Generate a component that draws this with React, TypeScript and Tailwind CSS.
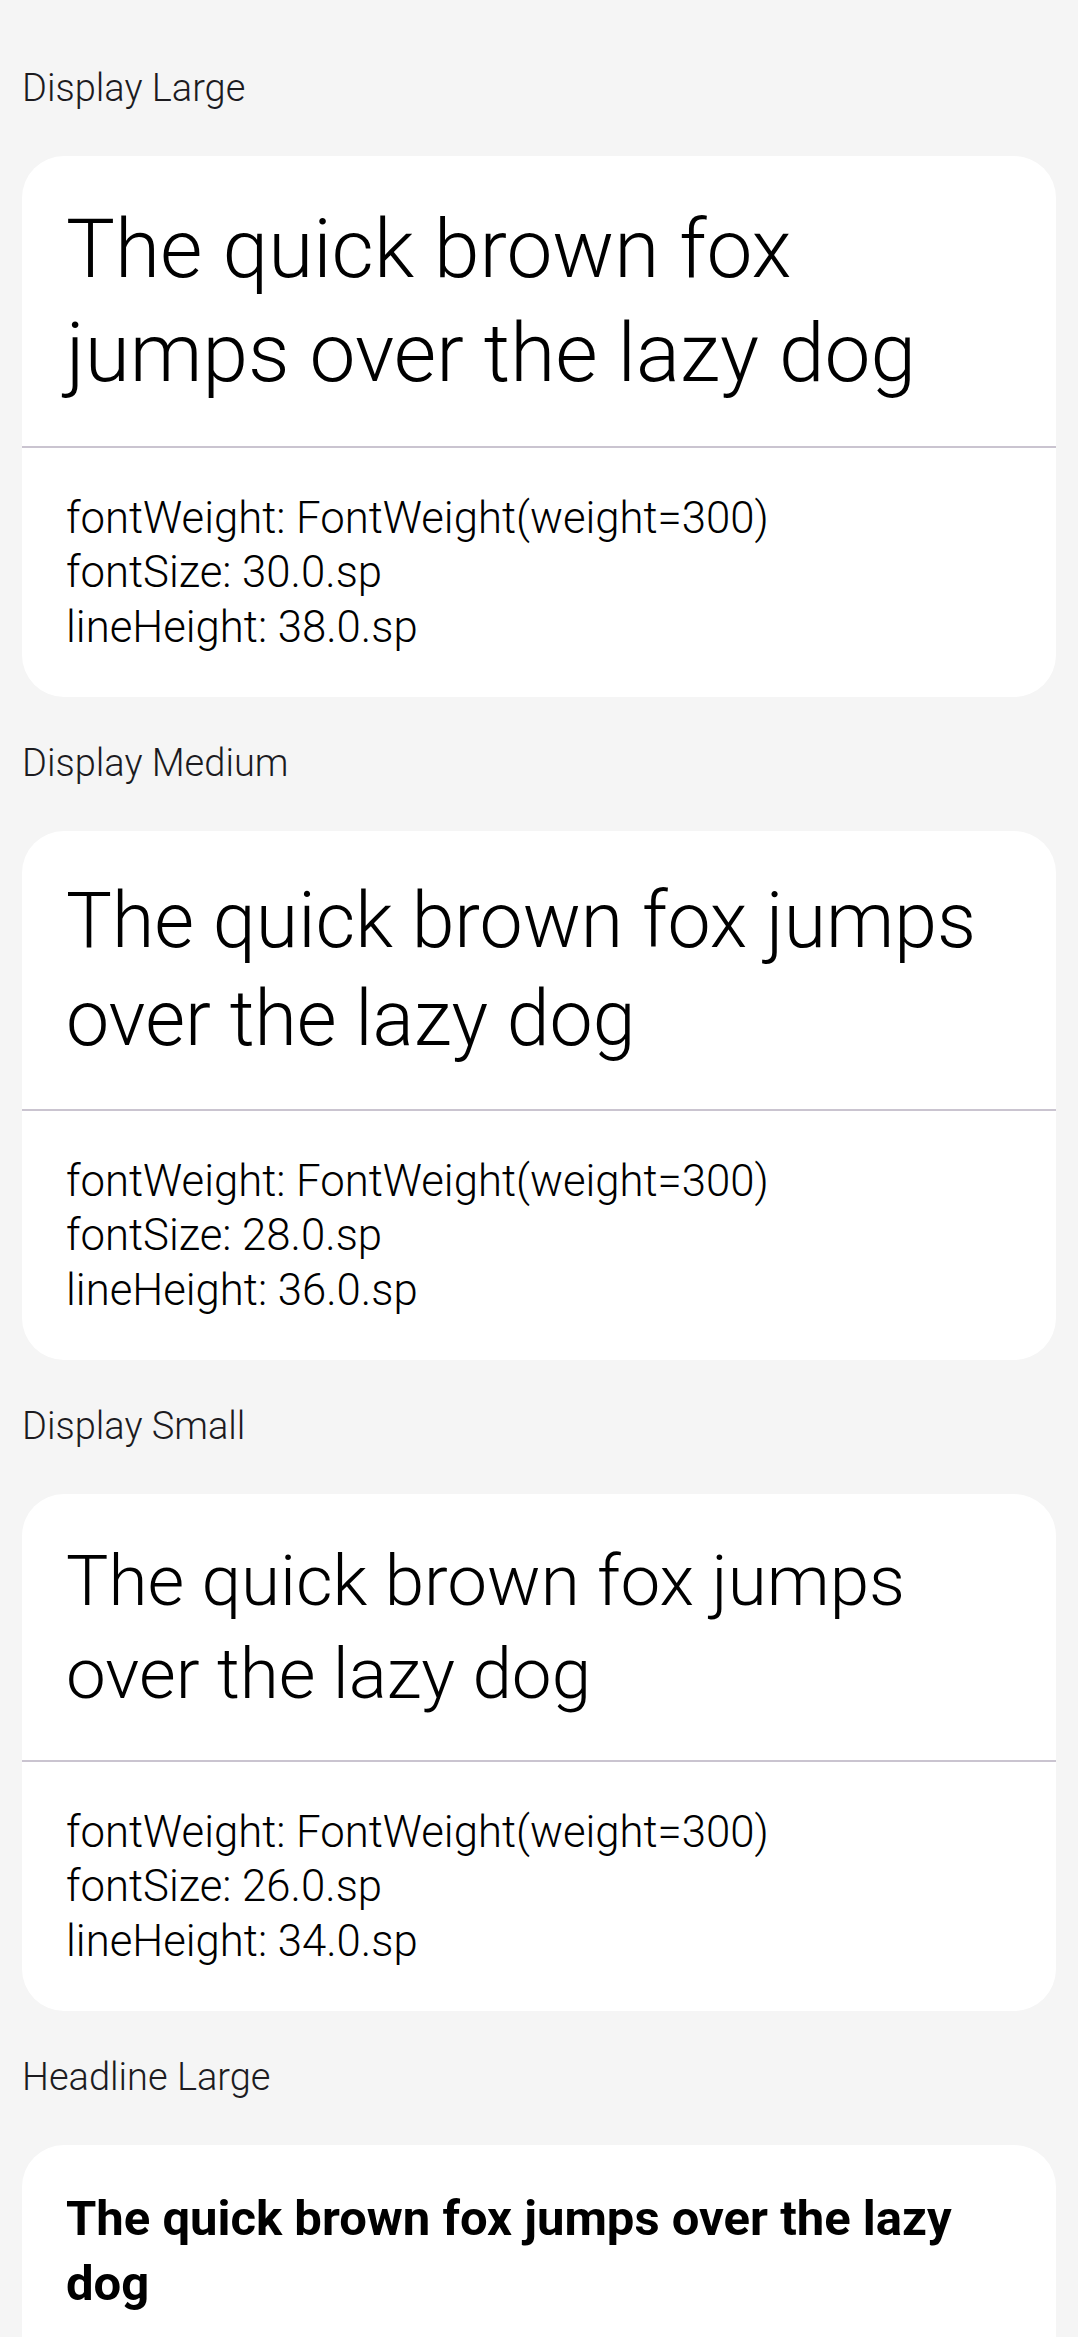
const samples = [
  {
    label: "Display Large",
    text: "The quick brown fox jumps over the lazy dog",
    sample: "py-[41px] text-[82px] leading-[104px] font-light",
    weight: 300,
    size: "30.0",
    lineHeight: "38.0",
  },
  {
    label: "Display Medium",
    text: "The quick brown fox jumps over the lazy dog",
    sample: "py-[41px] text-[77px] leading-[98px] font-light",
    weight: 300,
    size: "28.0",
    lineHeight: "36.0",
  },
  {
    label: "Display Small",
    text: "The quick brown fox jumps over the lazy dog",
    sample: "py-[40px] text-[71px] leading-[93px] font-light",
    weight: 300,
    size: "26.0",
    lineHeight: "34.0",
  },
  {
    label: "Headline Large",
    text: "The quick brown fox jumps over the lazy dog",
    sample: "py-[41px] text-[49px] leading-[65px] font-bold",
    weight: 700,
    size: "24.0",
    lineHeight: "32.0",
  },
];

export default function App() {
  return (
    <div className="min-h-screen bg-[#f5f5f5] px-[22px] pt-[22px] pb-[22px] font-['Roboto',sans-serif] text-black">
      {samples.map((s) => (
        <div key={s.label}>
          {/* section title */}
          <div className="py-[44px] text-[38px] leading-[45.5px] font-light text-[#1c1b1f]">
            {s.label}
          </div>

          <div className="bg-white rounded-[42px] overflow-hidden">
            <div className={`px-[44px] ${s.sample}`}>{s.text}</div>
            <div className="h-[2px] bg-[#cac4d0]" />
            <div className="px-[44px] py-[43px] text-[43.7px] leading-[54.5px] font-light">
              <p>fontWeight: FontWeight(weight={s.weight})</p>
              <p>fontSize: {s.size}.sp</p>
              <p>lineHeight: {s.lineHeight}.sp</p>
            </div>
          </div>
        </div>
      ))}
    </div>
  );
}
